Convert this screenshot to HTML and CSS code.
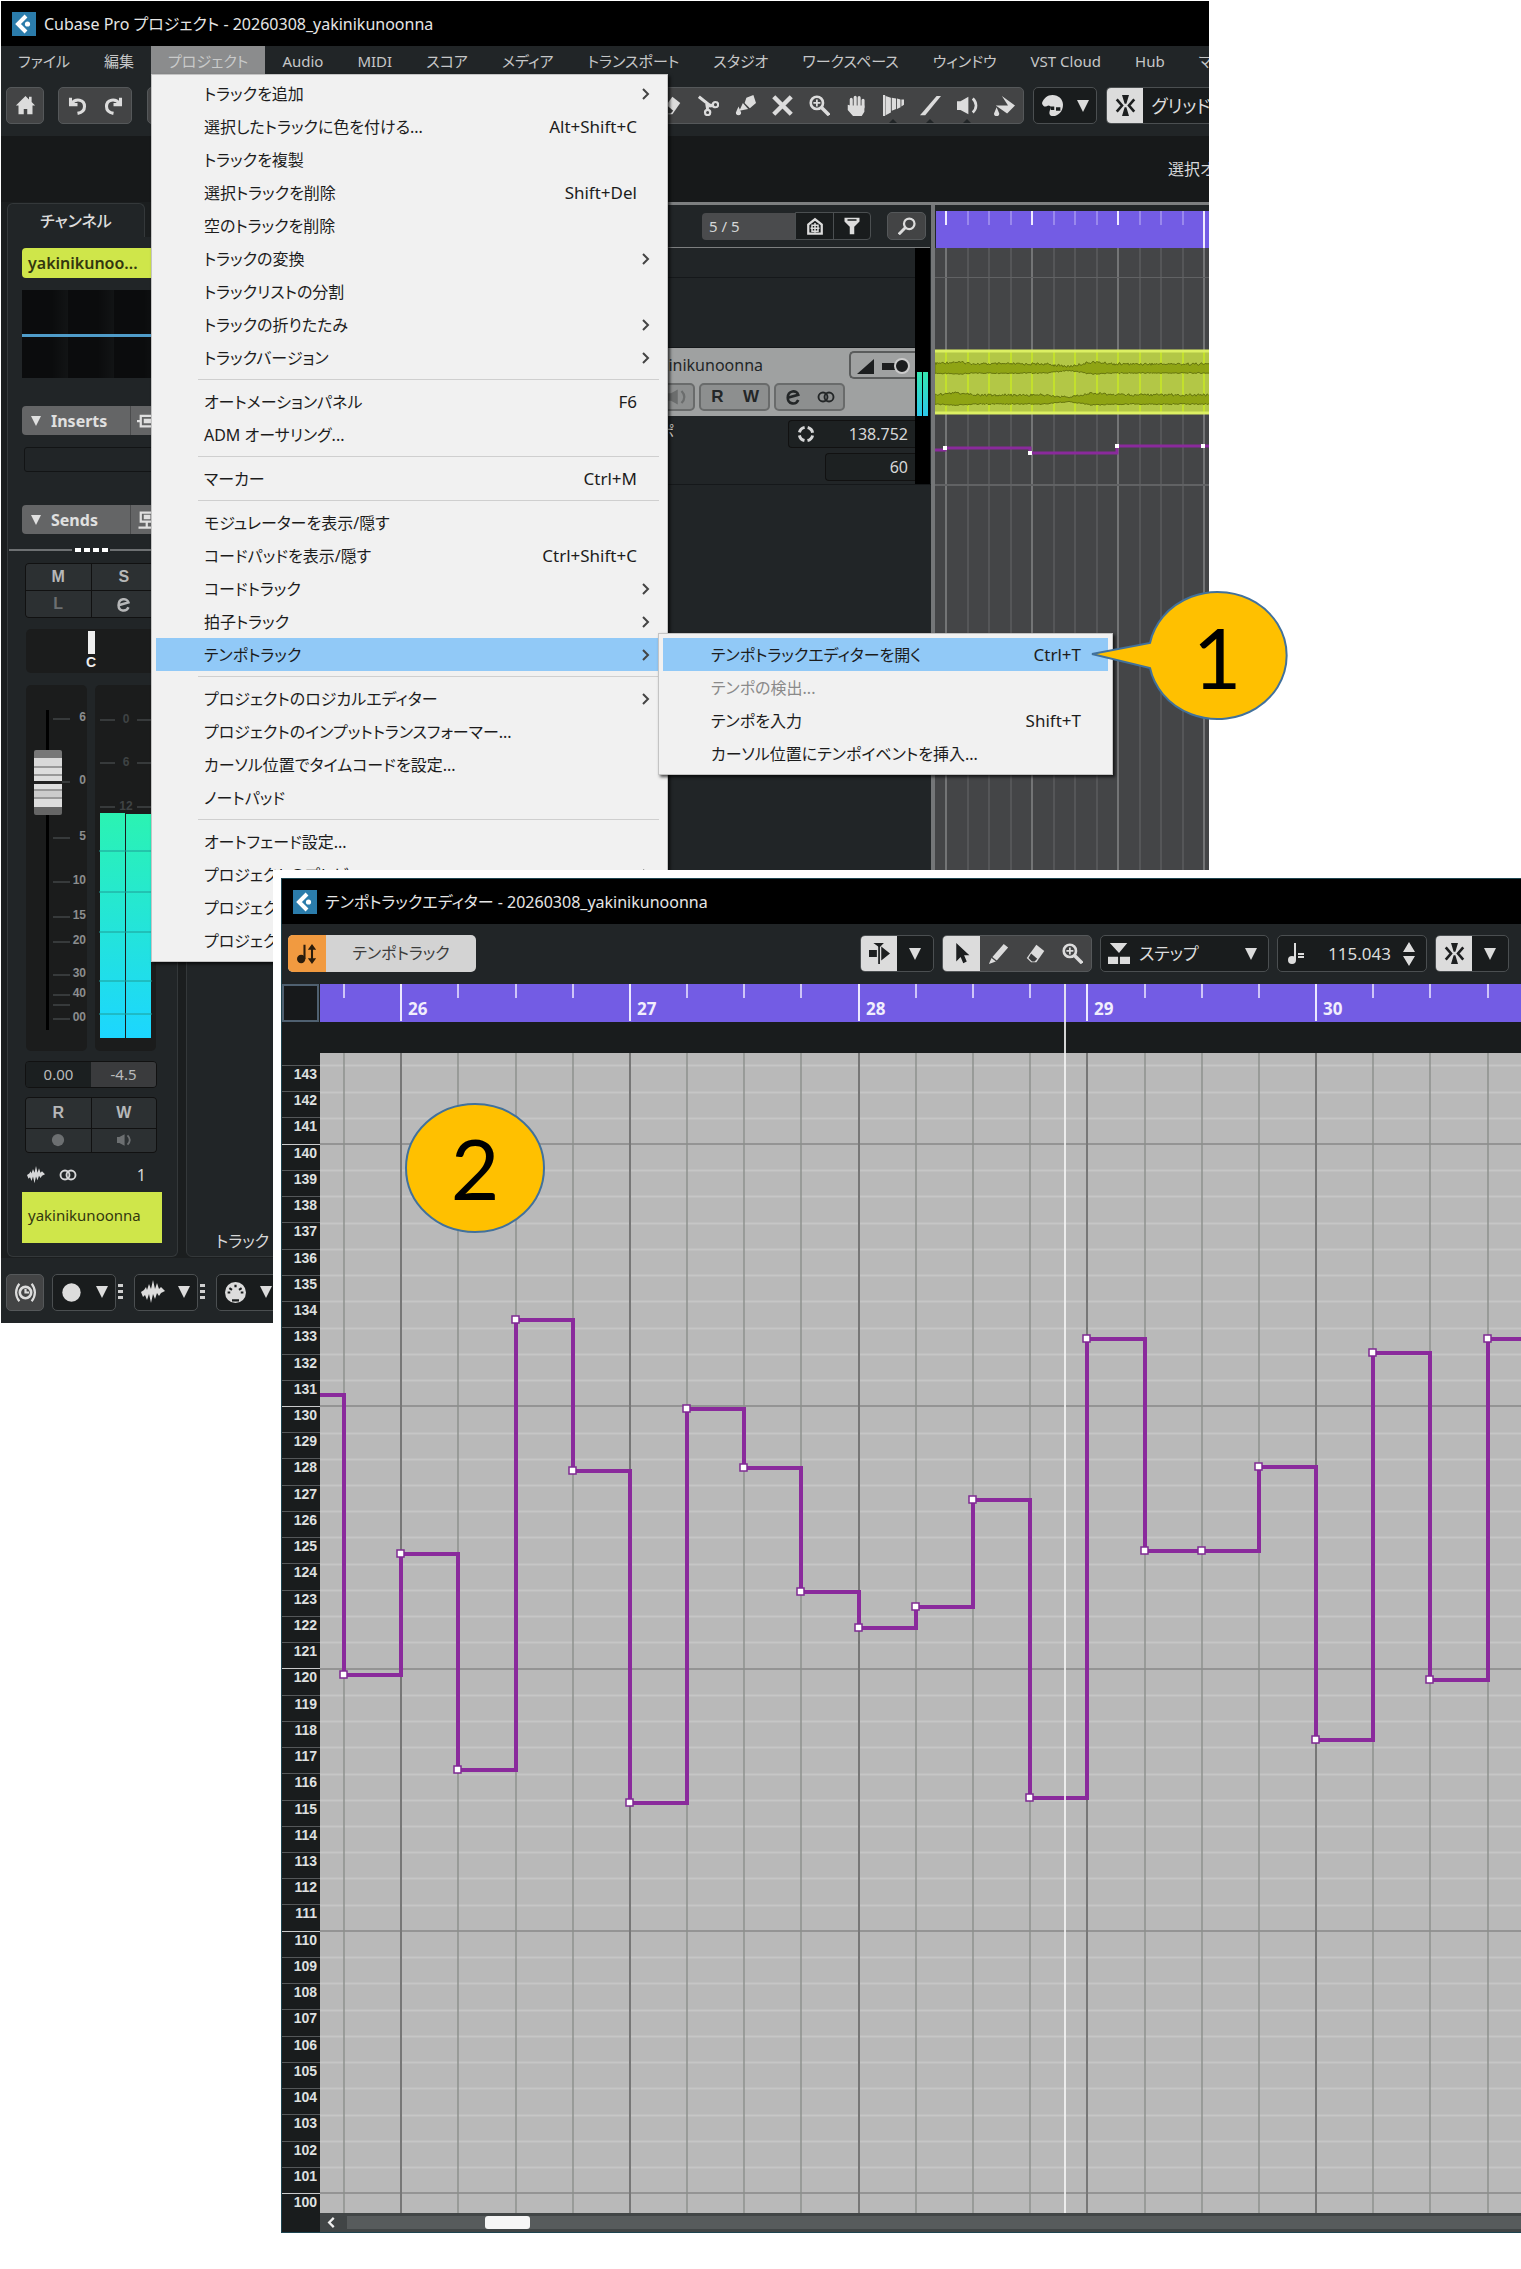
FILE: index.html
```html
<!DOCTYPE html>
<html lang="ja">
<head>
<meta charset="utf-8">
<meta name="viewport" content="width=device-width, initial-scale=1">
<title>テンポトラックエディターの開き方</title>
<link rel="stylesheet" href="styles.css">
</head>
<body>
<svg class="defs" aria-hidden="true">
  <symbol id="i-logo" viewBox="0 0 24 24"><path fill="#2b7cab" d="M0 0h24v24H0z"/><path d="M14 4 6 12l8 8" fill="none" stroke="#fff" stroke-width="4"/><circle cx="15.500" cy="12" r="2.600" fill="#fff"/></symbol>
  <symbol id="i-down" viewBox="0 0 12 12"><path d="M0 0h12L6 12z"/></symbol>
  <symbol id="i-chev" viewBox="0 0 8 12"><path d="M1 1l5 5-5 5" fill="none" stroke="#444" stroke-width="2"/></symbol>
  <symbol id="i-home" viewBox="0 0 24 24"><path d="M12 1 1 12h3v10h6v-6h4v6h6V12h3l-4-4V2h-3v3z"/></symbol>
  <symbol id="i-undo" viewBox="0 0 24 24"><path d="M4 3v8h8M5 10c5-7 15-5 15 3 0 4-3 7-8 8" fill="none" stroke="currentColor" stroke-width="3.500"/></symbol>
  <symbol id="i-redo" viewBox="0 0 24 24"><path d="M20 3v8h-8M19 10C14 3 4 5 4 13c0 4 3 7 8 8" fill="none" stroke="currentColor" stroke-width="3.500"/></symbol>
  <symbol id="i-eraser" viewBox="0 0 24 24"><path d="M13 2l9 7-9 13H7l-5-5z"/><path fill="#3a3b3c" d="M7 12l7 6-3 3H8l-4-4z"/></symbol>
  <symbol id="i-scissors" viewBox="0 0 24 24"><path d="M1 2l14 11M10 10l1 6" fill="none" stroke="currentColor" stroke-width="3.500"/><circle cx="20" cy="11" r="3" fill="none" stroke="currentColor" stroke-width="2.500"/><circle cx="11" cy="20" r="3" fill="none" stroke="currentColor" stroke-width="2.500"/><path d="M12 10h5v4h-5z"/></symbol>
  <symbol id="i-glue" viewBox="0 0 24 24"><path d="M13 3l8-3 3 9-7 6-6-6zM9 9l6 7-10 2zM4 13l3 7a3 3 0 1 1-6 0z"/></symbol>
  <symbol id="i-x" viewBox="0 0 24 24"><path d="M2 2l20 20M22 2 2 22" stroke="currentColor" stroke-width="5"/></symbol>
  <symbol id="i-zoom" viewBox="0 0 24 24"><circle cx="9" cy="9" r="7" fill="none" stroke="currentColor" stroke-width="3"/><path d="M9 5v8M5 9h8" stroke="currentColor" stroke-width="2"/><path d="M14 14l9 9" stroke="currentColor" stroke-width="4"/></symbol>
  <symbol id="i-hand" viewBox="0 0 24 24"><path d="M6 14V5M10.500 14V2.500M15 14V3M19.500 14V6" stroke="currentColor" stroke-width="3.500" stroke-linecap="round"/><path d="M2 11l3 1h16v7l-3 5H8l-6-7z"/></symbol>
  <symbol id="i-warp" viewBox="0 0 24 24"><path d="M0 0h2.500v24H0zM3 1l6 2v17l-6 3zM10 3l5 1v12l-5 2zM16 4l4 1v9l-4 2zM21 5h3v6l-3 2z"/></symbol>
  <symbol id="i-line" viewBox="0 0 24 24"><path d="M0 23 19 1h5L6 23z"/></symbol>
  <symbol id="i-speaker" viewBox="0 0 24 24"><path d="M0 7h4l9-5v20l-9-5H0z"/><path d="M18 4c5 5 5 11 0 16" fill="none" stroke="currentColor" stroke-width="3"/></symbol>
  <symbol id="i-bucket" viewBox="0 0 24 24"><path d="M9 1l15 11-9 9L2 12h14zM3 14l3 7a3 3 0 1 1-6 0z"/></symbol>
  <symbol id="i-palette" viewBox="0 0 24 24"><path d="M12 0c7 0 12 5 12 11 0 8-6 13-11 13-6 0-5-5-3-9 1-2-1-3-3-3-3 3-7 0-7-3C2 4 6 0 12 0z"/><path fill="#191c1d" d="M10 13h4v4h-4zM16 14h5v4h-5z"/></symbol>
  <symbol id="i-snap" viewBox="0 0 24 24"><path d="M8 0h8l-3 10h-2zM8 24h8l-3-10h-2z"/><path d="M2 5l6 7-6 7M22 5l-6 7 6 7" fill="none" stroke="currentColor" stroke-width="3"/></symbol>
  <symbol id="i-house" viewBox="0 0 24 24"><path d="M3 22V10l9-7 9 7v12z" fill="none" stroke="currentColor" stroke-width="3"/><path d="M12 8v13M6 15h12M8 11h8v8H8z" fill="none" stroke="currentColor" stroke-width="2"/></symbol>
  <symbol id="i-filter" viewBox="0 0 24 24"><path d="M2 1h20v5l-7 7v10H9V13L2 6z"/><path fill="#191c1d" d="M6 3h12v2H6z"/></symbol>
  <symbol id="i-search" viewBox="0 0 24 24"><circle cx="15" cy="9" r="7" fill="none" stroke="currentColor" stroke-width="3"/><path d="M10 14l-9 9" stroke="currentColor" stroke-width="4"/></symbol>
  <symbol id="i-e" viewBox="0 0 24 24"><path d="M5 13l14-4c-2-7-14-6-14 4 0 9 11 10 14 3" fill="none" stroke="currentColor" stroke-width="3.500"/></symbol>
  <symbol id="i-stereo" viewBox="0 0 24 16"><circle cx="8" cy="8" r="6" fill="none" stroke="currentColor" stroke-width="2.500"/><circle cx="16" cy="8" r="6" fill="none" stroke="currentColor" stroke-width="2.500"/></symbol>
  <symbol id="i-wave" viewBox="0 0 24 24"><path d="M0 12l3-2 2-3 1 3 2-6 2 5 2-9 2 9 2-6 2 6 2-2 4 4-4 2-2 3-2-3-2 6-2-5-2 9-2-9-2 6-2-5-2 2z"/></symbol>
  <symbol id="i-clock" viewBox="0 0 24 24"><circle cx="12" cy="12" r="6.500" fill="none" stroke="currentColor" stroke-width="3"/><path d="M12 8v4h4M5 2c-5 6-5 14 0 20M19 2c5 6 5 14 0 20" fill="none" stroke="currentColor" stroke-width="2.500"/></symbol>
  <symbol id="i-dot" viewBox="0 0 24 24"><circle cx="12" cy="12" r="10.500"/></symbol>
  <symbol id="i-midi" viewBox="0 0 24 24"><circle cx="12" cy="12" r="12"/><path d="M3 12h3M5 7l3 2M12 3v3M19 7l-3 2M21 12h-3M8 21h8" stroke="#191c1d" stroke-width="2.500"/></symbol>
  <symbol id="i-arrow" viewBox="0 0 24 24"><path d="M6 0v21l5-5 3 7 4-2-3-7h6z"/></symbol>
  <symbol id="i-pencil" viewBox="0 0 24 24"><path d="M18 1l5 4L10 20l-5-4zM4 17l5 4-8 3z"/></symbol>
  <symbol id="i-autoscroll" viewBox="0 0 24 24"><path d="M0 8h9v8H0zM14 8V4l10 8-10 8v-4zM5 0h12l-5 5z"/><path d="M11.500 2v22" stroke="currentColor" stroke-width="2"/></symbol>
  <symbol id="i-step" viewBox="0 0 24 24"><path d="M2 0h19l-9 11zM0 15h11v8H0zM13 15h11v8H13z"/></symbol>
  <symbol id="i-note" viewBox="0 0 16 22"><circle cx="4" cy="17" r="4"/><path d="M7 0v17" stroke="currentColor" stroke-width="2"/><path d="M10 11h6M10 14h6" stroke="currentColor" stroke-width="2"/></symbol>
  <symbol id="i-tempo" viewBox="0 0 24 24"><circle cx="5" cy="18" r="5"/><path d="M9 1v17M18 5v14" stroke="currentColor" stroke-width="2.500"/><path d="M18 0l5 7H13zM18 24l5-7H13z"/></symbol>
  <symbol id="i-spin" viewBox="0 0 12 24"><path d="M6 0l6 10H0zM6 24l6-10H0z"/></symbol>
  <symbol id="i-ring" viewBox="0 0 24 24"><circle cx="12" cy="12" r="9" fill="none" stroke="currentColor" stroke-width="4" stroke-dasharray="10 4.140" stroke-dashoffset="-2"/></symbol>
  <symbol id="i-insert" viewBox="0 0 24 24"><path d="M0 12h5M5 5h18v14H5z" fill="none" stroke="currentColor" stroke-width="3"/><path d="M9 9h10v6H9z"/></symbol>
  <symbol id="i-send" viewBox="0 0 24 24"><path d="M5 2h16v12H5zM13 14v7M2 22h22" fill="none" stroke="currentColor" stroke-width="3"/><path d="M9 5h9v6H9z"/></symbol>
</svg>

<main class="stage">
  <section class="window project">
    <header class="titlebar"><svg><use href="#i-logo"/></svg><span>Cubase Pro プロジェクト - 20260308_yakinikunoonna</span></header>

    <nav class="menubar">
      <button>ファイル</button><button>編集</button><div class="menu-host"><button class="open">プロジェクト</button>
        <ul class="menu main-menu">
          <li><button>トラックを追加<svg><use href="#i-chev"/></svg></button></li>
          <li><button>選択したトラックに色を付ける...<kbd>Alt+Shift+C</kbd></button></li>
          <li><button>トラックを複製</button></li>
          <li><button>選択トラックを削除<kbd>Shift+Del</kbd></button></li>
          <li><button>空のトラックを削除</button></li>
          <li><button>トラックの変換<svg><use href="#i-chev"/></svg></button></li>
          <li><button>トラックリストの分割</button></li>
          <li><button>トラックの折りたたみ<svg><use href="#i-chev"/></svg></button></li>
          <li><button>トラックバージョン<svg><use href="#i-chev"/></svg></button></li>
          <li class="sep"></li>
          <li><button>オートメーションパネル<kbd>F6</kbd></button></li>
          <li><button>ADM オーサリング...</button></li>
          <li class="sep"></li>
          <li><button>マーカー<kbd>Ctrl+M</kbd></button></li>
          <li class="sep"></li>
          <li><button>モジュレーターを表示/隠す</button></li>
          <li><button>コードパッドを表示/隠す<kbd>Ctrl+Shift+C</kbd></button></li>
          <li><button>コードトラック<svg><use href="#i-chev"/></svg></button></li>
          <li><button>拍子トラック<svg><use href="#i-chev"/></svg></button></li>
          <li class="has-sub"><button class="active">テンポトラック<svg><use href="#i-chev"/></svg></button>
            <ul class="menu sub-menu">
              <li><button class="active">テンポトラックエディターを開く<kbd>Ctrl+T</kbd></button></li>
              <li><button disabled>テンポの検出...</button></li>
              <li><button>テンポを入力<kbd>Shift+T</kbd></button></li>
              <li><button>カーソル位置にテンポイベントを挿入...</button></li>
            </ul>
          </li>
          <li class="sep"></li>
          <li><button>プロジェクトのロジカルエディター<svg><use href="#i-chev"/></svg></button></li>
          <li><button>プロジェクトのインプットトランスフォーマー...</button></li>
          <li><button>カーソル位置でタイムコードを設定...</button></li>
          <li><button>ノートパッド</button></li>
          <li class="sep"></li>
          <li><button>オートフェード設定...</button></li>
          <li><button>プロジェクトのプレビュー<svg><use href="#i-chev"/></svg></button></li>
          <li><button>プロジェクト</button></li>
          <li><button>プロジェクト</button></li>
        </ul>
      </div><button>Audio</button><button>MIDI</button><button>スコア</button><button>メディア</button><button>トランスポート</button><button>スタジオ</button><button>ワークスペース</button><button>ウィンドウ</button><button>VST Cloud</button><button>Hub</button><button>マ</button>
    </nav>

    <div class="toolbar">
      <div class="group lit"><button aria-label="ホーム"><svg><use href="#i-home"/></svg></button></div>
      <div class="group lit undo"><button aria-label="元に戻す"><svg><use href="#i-undo"/></svg></button><button aria-label="やり直し"><svg><use href="#i-redo"/></svg></button></div>
      <div class="group lit tools">
        <button aria-label="消しゴム"><svg><use href="#i-eraser"/></svg></button>
        <button aria-label="分割"><svg><use href="#i-scissors"/></svg></button>
        <button aria-label="のり"><svg><use href="#i-glue"/></svg></button>
        <button aria-label="ミュート"><svg><use href="#i-x"/></svg></button>
        <button aria-label="ズーム"><svg><use href="#i-zoom"/></svg></button>
        <button aria-label="コンプ"><svg><use href="#i-hand"/></svg></button>
        <button class="more" aria-label="ワープ"><svg><use href="#i-warp"/></svg></button>
        <button class="more" aria-label="ライン"><svg><use href="#i-line"/></svg></button>
        <button class="more" aria-label="再生"><svg><use href="#i-speaker"/></svg></button>
        <button aria-label="カラー"><svg><use href="#i-bucket"/></svg></button>
      </div>
      <div class="group"><button aria-label="カラーツール"><svg><use href="#i-palette"/></svg></button><button class="caret" aria-label="色を選択"><svg><use href="#i-down"/></svg></button></div>
      <div class="group snap"><button class="on" aria-label="スナップ"><svg><use href="#i-snap"/></svg></button><button class="snap-type">グリッド</button></div>
    </div>

    <div class="infoline"><span>選択オ</span></div>

    <div class="zones">
      <aside class="left-zone">
        <div class="channel">
          <div class="tab">チャンネル</div>
          <div class="strip">
            <div class="name-chip">yakinikunoo...</div>
            <div class="eq"></div>
            <div class="rack"><svg><use href="#i-down"/></svg><b>Inserts</b><i><svg><use href="#i-insert"/></svg></i></div>
            <div class="slot"></div>
            <div class="rack sends"><svg><use href="#i-down"/></svg><b>Sends</b><i><svg><use href="#i-send"/></svg></i></div>
            <div class="divider"></div>
            <div class="pads"><button>M</button><button>S</button><button class="dim">L</button><button aria-label="編集"><svg><use href="#i-e"/></svg></button></div>
            <div class="pan"><span></span>C</div>
            <div class="levels">
              <div class="fader">
                <svg id="fader-scale" width="61" height="366"></svg>
                <input type="range" min="0" max="1000" value="845" aria-label="音量">
              </div>
              <svg id="meter" width="61" height="366"></svg>
            </div>
            <div class="values"><output>0.00</output><output>-4.5</output></div>
            <div class="pads rw"><button>R</button><button>W</button><button class="dim" aria-label="録音"><svg><use href="#i-dot"/></svg></button><button class="dim" aria-label="モニター"><svg><use href="#i-speaker"/></svg></button></div>
            <div class="kind"><svg><use href="#i-wave"/></svg><svg><use href="#i-stereo"/></svg><span>1</span></div>
            <div class="name-plate">yakinikunoonna</div>
          </div>
        </div>
        <div class="second-panel">トラック</div>
      </aside>

      <div class="arrange">
        <div class="tracklist">
          <div class="list-head">
            <output class="count">5 / 5</output>
            <div class="group small"><button aria-label="表示"><svg><use href="#i-house"/></svg></button><button aria-label="フィルター"><svg><use href="#i-filter"/></svg></button></div>
            <div class="group small lit"><button aria-label="検索"><svg><use href="#i-search"/></svg></button></div>
          </div>
          <div class="list-body">
            <div class="rows">
              <div class="row empty-a"></div>
              <div class="row empty-b"></div>
              <div class="row track">
                <div class="track-top"><span>yakinikunoonna</span>
                  <div class="vol"><svg width="60" height="24"><path d="M2 20 19 5v15z"/><path d="M27 9h14v7H27z"/><circle cx="47" cy="12" r="7" stroke="#ccc" stroke-width="2"/></svg></div></div>
                <div class="track-btns">
                  <div><button class="dim" aria-label="モニター"><svg><use href="#i-speaker"/></svg></button></div>
                  <div><button>R</button><button>W</button></div>
                  <div><button aria-label="編集"><svg><use href="#i-e"/></svg></button><button aria-label="ステレオ"><svg><use href="#i-stereo"/></svg></button></div>
                </div>
              </div>
              <div class="row tempo">
                <span>テンポ</span>
                <div class="tempo-box"><svg><use href="#i-ring"/></svg><output>138.752</output></div>
                <div class="tempo-box short"><output>60</output></div>
              </div>
            </div>
            <div class="mini-meter"><span></span><span></span></div>
          </div>
        </div>
        <div class="timeline">
          <svg class="ruler" id="project-ruler"></svg>
          <svg class="lanes" id="project-lanes"></svg>
        </div>
      </div>
    </div>

    <footer class="bottombar">
      <div class="group lit"><button aria-label="同期"><svg><use href="#i-clock"/></svg></button></div>
      <div class="group"><button aria-label="録音モード"><svg><use href="#i-dot"/></svg></button><button class="caret" aria-label="録音モードを選択"><svg><use href="#i-down"/></svg></button></div>
      <div class="dots"></div>
      <div class="group"><button aria-label="オーディオ"><svg class="wide"><use href="#i-wave"/></svg></button><button class="caret" aria-label="オーディオを選択"><svg><use href="#i-down"/></svg></button></div>
      <div class="dots"></div>
      <div class="group"><button aria-label="MIDI"><svg><use href="#i-midi"/></svg></button><button class="caret" aria-label="MIDI を選択"><svg><use href="#i-down"/></svg></button></div>
    </footer>
  </section>

  <svg class="callout one" width="196" height="132" viewBox="0 0 196 132"><path d="M2 62 60 51A69 63.500 0 1 1 60 76Z" fill="#ffc000" stroke="#41719c" stroke-width="2"/><text x="127" y="97">1</text></svg>

  <div class="frame">
    <section class="window editor">
      <header class="titlebar"><svg><use href="#i-logo"/></svg><span>テンポトラックエディター - 20260308_yakinikunoonna</span></header>
      <div class="toolbar">
        <button class="track-toggle"><i><svg><use href="#i-tempo"/></svg></i><span>テンポトラック</span></button>
        <div class="group push"><button class="on" aria-label="自動スクロール"><svg><use href="#i-autoscroll"/></svg></button><button class="caret" aria-label="自動スクロール設定"><svg><use href="#i-down"/></svg></button></div>
        <div class="group lit"><button class="on" aria-label="選択"><svg><use href="#i-arrow"/></svg></button><button aria-label="鉛筆"><svg><use href="#i-pencil"/></svg></button><button aria-label="消しゴム"><svg><use href="#i-eraser"/></svg></button><button aria-label="ズーム"><svg><use href="#i-zoom"/></svg></button></div>
        <label class="group step"><svg><use href="#i-step"/></svg><select aria-label="カーブ"><option>ステップ</option></select><svg class="mini"><use href="#i-down"/></svg></label>
        <label class="group value"><svg><use href="#i-note"/></svg><input type="text" value="115.043" aria-label="テンポ"><svg class="spin"><use href="#i-spin"/></svg></label>
        <div class="group"><button class="on" aria-label="スナップ"><svg><use href="#i-snap"/></svg></button><button class="caret" aria-label="スナップ設定"><svg><use href="#i-down"/></svg></button></div>
      </div>
      <div class="score">
        <div class="corner"></div>
        <svg class="bars" id="bars"></svg>
        <ol class="axis" id="axis"></ol>
        <svg class="plot" id="plot"></svg>
        <div class="foot"></div>
        <div class="scroll"><button aria-label="左へ"><svg viewBox="0 0 8 12"><path d="M7 1 2 6l5 5" fill="none" stroke="#eee" stroke-width="2.500"/></svg></button><div class="rail"><span></span></div></div>
        <div class="playhead"></div>
      </div>
    </section>
  </div>

  <svg class="callout two" width="142" height="132" viewBox="0 0 142 132"><ellipse cx="71" cy="66" rx="69" ry="64" fill="#ffc000" stroke="#41719c" stroke-width="2"/><text x="71" y="98">2</text></svg>
</main>
<script src="draw.js"></script>
</body>
</html>
```
FILE: styles.css
```css
* { box-sizing: border-box; }
body {
  margin: 0;
  background: #fff;
  font: 16px/24px "Noto Sans", "Noto Sans CJK JP", sans-serif;
  font-feature-settings: "palt";
  color: #d6d7d8;
}
button, input, select {
  margin: 0; padding: 0; border: 0; background: none;
  font: inherit; font-feature-settings: inherit; color: inherit;
}
ul, ol { margin: 0; padding: 0; list-style: none; }
svg { display: block; fill: currentColor; }
.defs { position: absolute; width: 0; height: 0; }

.stage { display: grid; grid-template-columns: minmax(0, 1fr); position: relative; padding-bottom: 36px; }
.project, .frame { grid-area: 1 / 1; min-width: 0; }
.project { margin: 1px 312px 0 1px; align-self: start; background: #212527; }
.frame { margin: 870px 0 0 273px; padding: 8px 0 0 8px; background: #fff; position: relative; z-index: 3; }
.editor { background: #212527; border: 1px solid #1d4450; border-right: 0; }

.titlebar { display: flex; align-items: center; gap: 8px; height: 45px; padding: 0 11px; background: #000; color: #e6e6e6; }
.titlebar svg { width: 24px; height: 24px; }

/* menus */
.menubar { display: flex; height: 29px; white-space: nowrap; }
.menubar > button, .open { flex: none; height: 29px; padding: 0 17px; font-size: 15px; color: #c6c7c8; }
.menubar > button:last-child { flex: 1 1 0; min-width: 0; overflow: hidden; padding-right: 0; text-align: left; }
.menu-host { position: relative; flex: none; }
.menubar .open { background: #8b8c8d; color: #c9caca; }
.menu { position: absolute; background: #f1f1f1; border: 1px solid #c4c4c4; box-shadow: 2px 2px 3px rgba(0,0,0,.7); color: #1c1c1c; }
.main-menu { left: 0; top: 28px; width: 517px; padding: 2px 4px 4px; z-index: 2; }
.sub-menu { left: 502px; top: -5px; width: 455px; padding: 4px; }
.has-sub { position: relative; }
.menu button { display: flex; align-items: center; width: 100%; height: 33px; padding: 0 26px 0 48px; text-align: left; }
.sub-menu button { padding-right: 27px; }
.menu .active { background: #91c9f7; }
.menu button:disabled { color: #8a8a8a; }
.menu kbd { margin-left: auto; font: inherit; font-size: 17px; }
.menu svg { width: 8px; height: 12px; margin: 0 -13px 0 auto; }
.sep { height: 11px; margin: 0 4px 0 42px; background: linear-gradient(#cfcfcf, #cfcfcf) 0 5px / 100% 1px no-repeat; }

/* tool bars */
.toolbar { display: flex; align-items: flex-start; height: 61px; padding: 12px 0 0 5px; gap: 9px; }
.group { display: flex; flex: none; height: 37px; border: 1px solid #4b4f51; border-radius: 5px; background: #191c1d; overflow: hidden; color: #dcdcdc; }
.group.lit { background: #434445; border-color: #55585a; }
.group button { display: grid; place-items: center; width: 36px; height: 35px; }
.group button svg { width: 21px; height: 21px; }
.group .wide { width: 26px; height: 24px; }
.group .caret { width: 26px; }
.group .caret svg, .group .mini { width: 12px; height: 12px; }
.group .on { background: #dcdcdc; color: #1d1f20; }
.undo { margin: 0 6px 0 5px; }
.tools { flex: 1 1 0; min-width: 0; justify-content: flex-end; }
.tools button { flex: none; position: relative; }
.tools button, .editor .lit button { width: 37px; }
.more::after { content: ""; position: absolute; bottom: -1px; left: 13px; border: 5px solid transparent; border-top: 0; border-bottom-color: #212527; }
.snap { width: 103px; border-right: 0; border-radius: 5px 0 0 5px; }
.snap .on { flex: none; }
.group .snap-type { width: 70px; font-size: 18px; padding-left: 6px; flex: none; white-space: nowrap; }
.infoline { display: flex; justify-content: flex-end; align-items: center; height: 66px; background: #17191a; }
.infoline span { width: 41px; overflow: hidden; white-space: nowrap; }

/* left zone */
.zones { display: grid; grid-template-columns: 450px minmax(0, 1fr); height: 1056px; }
.left-zone { display: flex; gap: 8px; padding: 1px 0 1px 6px; background: #1b1e1f; }
.channel { width: 171px; display: flex; flex-direction: column; }
.tab { width: 138px; height: 34px; border: 1px solid #34383a; border-bottom: 0; border-radius: 6px 6px 0 0; background: #212527; text-align: center; line-height: 34px; color: #dcdcdc; font-weight: 500; }
.strip { flex: 1; padding: 11px 15px 0 14px; border: 1px solid #34383a; border-top: 0; border-radius: 0 6px 6px 6px; background: #212527; }
.name-chip { height: 30px; padding-left: 6px; border-radius: 4px; background: #cfe64a; color: #32370f; font-weight: 600; line-height: 30px; }
.eq { height: 88px; margin-top: 12px; background: linear-gradient(#4f9cc9, #4f9cc9) 0 44px / 100% 3px no-repeat, repeating-linear-gradient(90deg, #0b0c0d 0 30px, #121415 46px); }
.rack { display: flex; align-items: center; height: 29px; margin-top: 28px; padding-left: 9px; border-radius: 4px; background: #646566; color: #e0e0e0; }
.rack > svg { width: 10px; height: 10px; margin-right: 10px; }
.rack b { width: 79px; }
.rack i { display: grid; place-items: center; width: 30px; height: 29px; border-left: 1px solid #4a4b4c; }
.rack i svg { width: 18px; height: 18px; }
.slot { height: 25px; margin: 12px 0 0 2px; border: 1px solid #121415; border-radius: 3px; }
.sends { margin-top: 33px; }
.divider { height: 4px; margin: 14px -13px 0; background: repeating-linear-gradient(90deg, #fff 0 6px, transparent 6px 9px) 66px 0 / 33px 4px no-repeat, linear-gradient(#6d7072, #6d7072) 0 1px / 63px 2px no-repeat, linear-gradient(#6d7072, #6d7072) 101px 1px / 64px 2px no-repeat; }
.pads { display: grid; grid-template-columns: 1fr 1fr; gap: 1px; height: 55px; margin: 11px 5px 0 3px; border: 1px solid #111; border-radius: 4px; background: #111; overflow: hidden; }
.pads button { display: grid; place-items: center; background: #2c3032; font: bold 16px/20px "Liberation Sans", sans-serif; color: #b6b7b8; }
.pads .dim { color: #6c6f71; }
.pads svg { width: 17px; height: 17px; }
.pan { display: flex; flex-direction: column; align-items: center; height: 44px; margin: 11px 6px 0 4px; padding-top: 2px; border-radius: 5px; background: #1b1c1c; font: 600 14px/14px "Liberation Sans", sans-serif; color: #eee; }
.pan span { width: 7px; height: 23px; margin-bottom: 1px; background: #eee; }
.levels { display: flex; justify-content: space-between; margin: 12px 6px 0 4px; }
.levels > * { border-radius: 5px; background: #1b1c1c; }
.fader { display: grid; }
.fader > * { grid-area: 1 / 1; }
.levels text { font: bold 12px "Liberation Sans", sans-serif; fill: #8b8d8e; text-anchor: end; }
#meter text { fill: #3f4344; text-anchor: middle; }
.fader input { appearance: none; writing-mode: vertical-lr; direction: rtl; width: 28px; height: 320px; margin: 25px 0 0 8px; }
.fader input::-webkit-slider-thumb { appearance: none; width: 28px; height: 65px; border-radius: 2px; background: linear-gradient(#777 0 8px, #d9d9d9 8px 16px, #999 16px 18px, #ddd 18px 24px, #999 24px 26px, #ddd 26px 31px, #222 31px 34px, #ddd 34px 39px, #999 39px 41px, #ccc 41px 47px, #999 47px 49px, #ddd 49px 57px, #666 57px); }
.values { display: flex; height: 27px; margin: 10px 5px 0 3px; border: 1px solid #111; border-radius: 4px; overflow: hidden; }
.values output { flex: 1; text-align: center; font-size: 15px; line-height: 25px; background: #1b1f20; color: #b9babb; }
.values output + output { background: #3a3b3d; }
.rw { height: 56px; margin-top: 9px; }
.rw svg { width: 14px; height: 14px; }
.kind { display: flex; align-items: center; gap: 14px; height: 20px; margin: 12px 16px 0 5px; }
.kind svg { width: 18px; height: 18px; }
.kind span { margin-left: auto; }
.name-plate { height: 51px; margin-top: 7px; padding: 11px 6px; background: #cfe64a; color: #32370f; font-size: 15px; }
.second-panel { flex: 1; display: flex; align-items: flex-end; padding: 0 0 3px 29px; border: 1px solid #34383a; border-radius: 6px; background: #212527; }

/* track list and time line */
.arrange { display: grid; grid-template-columns: minmax(0, 1fr) 278px; border-top: 3px solid #7d7f80; }
.tracklist { display: flex; flex-direction: column; min-width: 0; }
.list-head { display: flex; justify-content: flex-end; align-items: center; height: 43px; padding-right: 4px; border-bottom: 1px solid #7d7f80; margin-right: 1px; }
.count { width: 93px; height: 27px; padding-left: 7px; background: #4a4b4d; border-radius: 4px 0 0 4px; font-size: 15px; line-height: 26px; }
.small { height: 28px; }
.small:nth-of-type(1) { border-radius: 0 4px 4px 0; margin-right: 16px; }
.group.small button { width: 37px; height: 26px; }
.small button + button { border-left: 1px solid #4b4f51; }
.group.small svg { width: 18px; height: 18px; }
.list-body { display: flex; height: 237px; border-bottom: 1px solid #15181a; }
.rows { flex: 1; min-width: 0; }
.row { border-bottom: 1px solid #15181a; }
.empty-a { height: 30px; }
.empty-b { height: 70px; }
.track { height: 68px; padding: 3px 0 0; border: 0; background: #9fa1a1; color: #232627; }
.track-top { display: flex; justify-content: flex-end; height: 32px; }
.track-top span { margin-right: 86px; line-height: 28px; }
.vol { width: 66px; height: 28px; padding: 1px 4px; border: 2px solid #5a5c5c; border-right: 0; border-radius: 5px 0 0 5px; color: #1c1e1f; }
.track-btns { display: flex; gap: 4px; justify-content: flex-end; padding-right: 70px; }
.track-btns div { display: flex; height: 28px; border: 2px solid #696b6b; border-radius: 5px; background: #8d8f8f; }
.track-btns button { display: grid; place-items: center; width: 33px; font: bold 17px/20px "Liberation Sans", sans-serif; }
.track-btns div button + button { width: 34px; }
.track-btns .dim { color: #6b6d6d; }
.track-btns svg { width: 18px; height: 18px; }
.tempo { display: grid; grid-template-columns: 1fr 127px; justify-items: end; gap: 5px 0; padding-top: 4px; border: 0; }
.tempo > span { margin-right: 114px; white-space: nowrap; }
.tempo-box { display: flex; align-items: center; width: 127px; height: 28px; padding-right: 7px; border: 1px solid #111; border-right: 0; border-radius: 4px 0 0 4px; background: #1d2122; }
.tempo-box svg { width: 34px; height: 18px; }
.tempo-box output { margin-left: auto; }
.short { grid-column: 2; width: 90px; }
.mini-meter { display: flex; align-items: flex-end; justify-content: center; gap: 1px; width: 15px; padding-bottom: 68px; margin-right: 1px; background: #000; }
.mini-meter span { width: 5px; height: 44px; background: linear-gradient(#35e6b0, #2cc8ea); }
.timeline { display: flex; flex-direction: column; padding-top: 6px; border-left: 4px solid #747678; min-width: 0; background: #212527; }
.ruler { width: 100%; height: 37px; background: #735ce4; border-left: 1px solid #212527; }
.lanes { width: 100%; flex: 1; background: #444547; }

.bottombar { display: flex; align-items: center; gap: 8px; height: 65px; padding: 3px 0 0 5px; background: #212527; }
.dots { width: 5px; height: 16px; margin: 0 3px 0 -6px; background: repeating-linear-gradient(#d0d0d0 0 3px, transparent 3px 6px); }

/* tempo editor */
.editor .toolbar { height: 60px; padding: 11px 12px 0 6px; gap: 8px; }
.track-toggle { display: flex; width: 188px; height: 37px; border-radius: 5px; overflow: hidden; background: #d3d3d3; color: #3c3c3c; line-height: 36px; }
.track-toggle i { display: grid; place-items: center; width: 38px; height: 37px; background: #f19a40; color: #2a1c0c; }
.track-toggle svg { width: 20px; height: 22px; }
.track-toggle span { flex: 1; }
.push { margin-left: auto; }
.editor .caret { width: 36px; }
.step, .value { align-items: center; width: 169px; padding: 0 11px 0 6px; gap: 8px; }
.step > svg:first-child { width: 24px; height: 22px; }
.step select { appearance: none; flex: 1; min-width: 0; font-size: 17px; }
.value { width: 150px; padding-left: 10px; gap: 12px; }
.value > svg:first-child { width: 16px; height: 22px; }
.value input { flex: 1; min-width: 0; text-align: right; font-size: 17px; }
.value .spin { width: 12px; height: 24px; }
.score { display: grid; grid-template-columns: 38px minmax(0, 1fr); grid-template-rows: 38px 31px 1160px 19px; position: relative; background: #191c1d; }
.corner { margin: 0 1px 0 0; border: 2px solid #4f6070; background: #17191b; }
.bars { width: 100%; height: 38px; background: #735ce4; }
.bars text { font: bold 17px "Open Sans", sans-serif; fill: #f1eefc; }
.axis { grid-row: 3; display: grid; grid-template-rows: 12px repeat(43, 1fr) 20px; }
.axis li { border-top: 1px solid #55585a; padding-right: 3px; text-align: right; font: bold 14px/16px "Liberation Sans", sans-serif; color: #dfe0e0; }
.axis li:first-child { border: 0; }
.axis .ten { border-color: #c9cacb; }
.plot { grid-row: 3; width: 100%; height: 1160px; background: #b9b9b9; }
.foot { grid-row: 4; }
.scroll { grid-row: 4; display: flex; align-items: center; background: #414546; }
.scroll button { width: 27px; padding-left: 7px; }
.scroll button svg { width: 8px; height: 11px; }
.rail { flex: 1; height: 13px; padding-left: 138px; background: #575b5c; }
.rail span { display: block; width: 45px; height: 13px; border-radius: 3px; background: #f6f6f6; }
.playhead { position: absolute; left: 782px; top: 0; bottom: 19px; width: 2px; background: rgba(245,245,245,.85); }

/* numbered callouts */
.callout { position: absolute; overflow: visible; z-index: 4; }
.callout text { font: 84px Lato, sans-serif; fill: #000; text-anchor: middle; }
.one { left: 1090px; top: 592px; }
.two { left: 404px; top: 1102px; }
```
FILE: draw.js
```js
const line = (x1, y1, x2, y2, color, w = 1) =>
  `<path d="M${x1} ${y1}L${x2} ${y2}" stroke="${color}" stroke-width="${w}"/>`;
const fill = (id, html) => { document.getElementById(id).innerHTML = html; };

// Tempo editor: one value per beat, starting before bar 26
const X0 = 24, BEAT = 57.18, Y140 = 91, UNIT = 26.23;
const tempoY = [622, 501, 717, 267, 418, 750, 356, 415, 539, 575, 554, 447, 745, 286, 498, 498, 414, 687, 300, 627, 286];
const beatX = i => Math.round(X0 + i * BEAT);
const plotWidth = document.getElementById('plot').clientWidth || 1201;

let bars = '', grid = '';
for (let v = 143; v >= 100; v--) {
  const y = Math.round(Y140 + (140 - v) * UNIT);
  grid += v % 10 ? line(0, y + .5, 4000, y + .5, '#c6c6c6', 2) : line(0, y, 4000, y, '#949494', 2);
}
for (let i = 0; beatX(i) < plotWidth; i++) {
  const x = beatX(i), bar = i % 4 === 1;
  grid += line(x, 0, x, 1160, bar ? '#777' : '#8b8f8b', bar ? 2 : 1.4);
  bars += line(x, 0, x, bar ? 37 : 14, '#ece8ff', bar ? 2 : 1.5);
  if (bar) bars += `<text x="${x + 7}" y="31">${26 + (i - 1) / 4}</text>`;
}
let path = 'M0 342H' + beatX(0), knobs = '';
tempoY.forEach((y, i) => {
  path += `V${y}H${beatX(i + 1)}`;
  knobs += `<rect x="${beatX(i) - 4}" y="${y - 4}" width="7" height="7" fill="#fff" stroke="#7f2a93" stroke-width="1.5"/>`;
});
fill('bars', bars);
fill('plot', grid + `<path d="${path}" fill="none" stroke="#8a2a9c" stroke-width="4"/>` + knobs);
let axis = '<li></li>';
for (let v = 143; v >= 100; v--) axis += `<li${v % 10 ? '' : ' class="ten"'}>${v}</li>`;
fill('axis', axis);

// Project time line
let ruler = '', lanes = '', clipGrid = '';
for (let i = 0; i < 13; i++) {
  const x = Math.round(11 + i * 21.5), major = i % 4 === 0;
  ruler += line(x - 1, 0, x - 1, i === 12 ? 37 : 14, major ? '#efeaff' : '#a697f0', major ? 2 : 1.5);
  lanes += line(x, 0, x, 1000, major ? '#808183' : '#5a5b5d', 1.6);
  clipGrid += line(x, 104, x, 164, '#c3e02c', 2);
}
lanes += line(0, 29.5, 400, 29.5, '#616264') + line(0, 237, 400, 237, '#616264', 2);
lanes += '<path fill="#b3c746" d="M0 102h400v64H0z"/>' + clipGrid + line(0, 103, 400, 103, '#dcef63', 3) + line(0, 165, 400, 165, '#dcef63', 3);
[120, 151].forEach((cy, n) => {
  let top = '', bottom = '';
  for (let x = 0; x <= 280; x++) {
    const noise = Math.sin(x * 12.9898 + n * 4.1) * 43758.5453;
    const jitter = (noise - Math.floor(noise) - .5) * 2.6;
    const dip = Math.max(0, 1 - Math.abs(x - 133) / 24) * 2.5;
    const swell = Math.max(0, 1 - Math.abs(x - 158) / 22) * 2 + Math.max(0, 1 - Math.abs(x - 20) / 24) * 2;
    top += `L${x} ${cy - 4 + dip - swell + jitter}`;
    bottom = `L${x} ${cy + 5 - dip + swell / 2 - jitter / 2}` + bottom;
  }
  lanes += `<path d="M0 ${cy}${top}${bottom}Z" fill="#8fa414" stroke="#66760e"/>`;
});
lanes += '<path d="M0 202H10V200H95V205H182V198H280" fill="none" stroke="#8a2a9c" stroke-width="3"/>';
[[10, 200], [95, 205], [182, 198], [268, 198]].forEach(([x, y]) => {
  lanes += `<rect x="${x - 2}" y="${y - 2}" width="4" height="4" fill="#fff"/>`;
});
fill('project-ruler', ruler);
fill('project-lanes', lanes);

// Fader and meter scales
let scale = line(21.5, 25, 21.5, 345, '#000', 3);
[['6', 34], ['0', 97], ['5', 153], ['10', 197], ['15', 232], ['20', 257], ['30', 290], ['40', 310], ['', 320], ['00', 334]].forEach(([t, y]) => {
  scale += line(27, y, 44, y, '#55585a') + `<text x="60" y="${y + 2}">${t}</text>`;
});
fill('fader-scale', scale);
let meter = '<defs><linearGradient id="lvl" x2="0" y2="1"><stop stop-color="#2bf3b2"/><stop offset="1" stop-color="#1cd6ff"/></linearGradient></defs>';
[['0', 35], ['6', 78], ['12', 122]].forEach(([t, y]) => {
  meter += line(5, y, 20, y, '#55585a') + line(42, y, 57, y, '#55585a') + `<text x="31" y="${y + 3}">${t}</text>`;
});
meter += '<path fill="url(#lvl)" d="M5 128h25v225H5zM31 129h25v224H31z"/>';
[166, 207, 247, 296, 329].forEach(y => { meter += line(4, y, 57, y, '#1e9c96'); });
fill('meter', meter);
```
